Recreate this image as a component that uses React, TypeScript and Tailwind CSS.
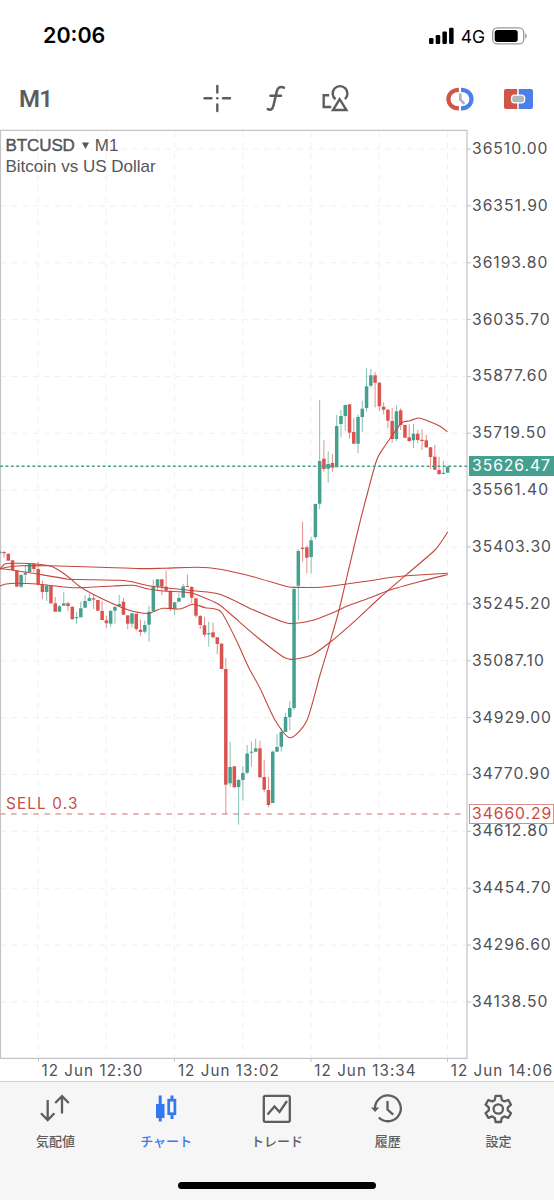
import type { ReactNode } from "react";

const TEAL = "#45a08f";
const RED = "#d9544f";
const STEP = 4.265;
const LAST_X = 447.5;
const COUNT = 104;

type Candle = ["g" | "r", number, number, number, number];

// side, body top, body bottom, wick top, wick bottom
const candles: Candle[] = [
  ["g", 551.7, 553.2, 550, 554],
  ["r", 552, 553.2, 551, 557.5],
  ["r", 553.7, 560.7, 553.7, 560.7],
  ["r", 560.3, 570, 560.3, 571],
  ["r", 570.7, 586.7, 570.7, 586.7],
  ["g", 575, 586.7, 574, 588],
  ["g", 572.7, 574.7, 565, 582.7],
  ["g", 564, 572, 563, 572],
  ["r", 564, 569, 563, 572],
  ["r", 569, 584.7, 562, 585.3],
  ["r", 585, 592, 580.7, 599],
  ["g", 585.7, 592, 584, 601],
  ["r", 585.7, 603.3, 585, 604],
  ["r", 603.3, 611.7, 597, 611.7],
  ["g", 606.3, 611.7, 605, 611.7],
  ["g", 603.3, 605.7, 591.7, 605.7],
  ["r", 603.3, 606, 601.7, 611],
  ["r", 606.7, 619.3, 606.7, 619.3],
  ["g", 617, 618.2, 612, 623.7],
  ["g", 608.3, 617.3, 601.7, 617.3],
  ["g", 601, 607.7, 595, 607.7],
  ["g", 598, 601, 594, 601],
  ["r", 598.3, 599.6, 595, 609],
  ["r", 600, 610.7, 600, 611],
  ["r", 611, 620, 601, 620],
  ["r", 620.3, 623.3, 615.7, 628],
  ["g", 611, 623.7, 610, 626.7],
  ["g", 607, 610.7, 606, 623.7],
  ["g", 604, 606, 595, 607],
  ["r", 601.7, 614.7, 598, 615],
  ["r", 615.3, 623.7, 615.3, 629],
  ["g", 613.3, 623.7, 613, 627.7],
  ["r", 613.7, 629, 613.7, 631],
  ["r", 629.7, 632, 619.3, 635.7],
  ["g", 625, 631.7, 620.7, 633.7],
  ["g", 611.7, 624.7, 606, 641.7],
  ["g", 586.3, 611, 580, 611],
  ["g", 579.3, 586.7, 579, 591],
  ["r", 579.3, 586.7, 579, 595],
  ["r", 586.7, 590.7, 570.7, 591],
  ["r", 590.7, 609, 590.7, 611],
  ["g", 602.3, 608.3, 602, 615],
  ["g", 598, 601.7, 592.7, 601.7],
  ["g", 586.3, 597.7, 584, 597.7],
  ["r", 586, 587, 574.5, 587],
  ["r", 587, 597.7, 586, 603],
  ["r", 598.3, 615.7, 598, 617.5],
  ["r", 616, 625, 615, 629],
  ["r", 625.3, 634.7, 617, 637],
  ["g", 633.2, 634.4, 621.7, 646.7],
  ["r", 632.3, 637.3, 622.7, 638],
  ["r", 637.3, 644, 637, 654],
  ["r", 643.7, 669, 643, 669],
  ["r", 669, 784.7, 658, 814],
  ["g", 767, 783.3, 741.7, 786.7],
  ["r", 766.3, 787.3, 766, 787.3],
  ["g", 780, 787, 779, 824.7],
  ["g", 773, 780, 766, 800.7],
  ["g", 753.5, 772.8, 745, 774],
  ["g", 751.7, 752.7, 741.7, 766.7],
  ["g", 748.3, 751.7, 738.7, 752],
  ["r", 748.3, 777.3, 740.7, 778],
  ["r", 777, 789.7, 760, 792],
  ["r", 790, 805, 776.7, 807.3],
  ["g", 751.7, 803, 750.5, 803],
  ["g", 747, 751.7, 734, 752],
  ["g", 732, 746.7, 728.3, 751.7],
  ["g", 717, 732, 712.7, 732],
  ["g", 708, 717, 701.3, 730],
  ["g", 589, 708, 588, 710],
  ["g", 551, 585.7, 549.3, 620],
  ["r", 547.7, 549, 521.7, 561.7],
  ["r", 547.3, 557.7, 545.3, 573.3],
  ["g", 540.3, 557, 536.7, 573.3],
  ["g", 504, 537, 503.5, 539.3],
  ["g", 461, 503.7, 400, 509],
  ["r", 458.7, 469, 440, 471.7],
  ["g", 464, 468.7, 451.3, 482.7],
  ["r", 463, 467.7, 453.7, 471.7],
  ["g", 426, 467.3, 415, 467.5],
  ["g", 416, 424, 410, 437.3],
  ["g", 405, 416, 404.5, 430.7],
  ["r", 404.3, 432.7, 404, 438.7],
  ["r", 432, 443.7, 418.3, 444],
  ["g", 417, 443.7, 414.3, 453.3],
  ["g", 408.7, 417, 400.7, 431.7],
  ["g", 386.3, 408, 368.3, 411.7],
  ["g", 375.3, 385.7, 369, 387.3],
  ["r", 375.3, 382.7, 372, 407.3],
  ["r", 382.7, 406.3, 382, 411],
  ["r", 406.7, 409.7, 402.3, 414.3],
  ["r", 409.7, 420.7, 409, 428.3],
  ["r", 421, 439, 408, 442.7],
  ["g", 411.3, 439, 405.3, 441],
  ["r", 410.3, 425, 408.3, 430],
  ["r", 425, 437.7, 424.5, 438],
  ["r", 437.3, 441, 424.3, 442],
  ["g", 433.7, 440.3, 424, 448],
  ["r", 433.7, 440, 430, 443],
  ["r", 439.8, 441, 429.3, 450],
  ["r", 440.3, 447.3, 435, 448],
  ["r", 447.3, 457, 447, 469],
  ["r", 456.7, 469.7, 445, 470],
  ["r", 470, 474, 456.7, 475],
  ["g", 472.8, 474, 461, 474],
  ["g", 466.7, 472.7, 466, 473],
];

type Pt = [number, number];
const averages: Pt[][] = [
  [[0, 569], [8, 567], [20, 565.8], [50, 565.8], [100, 567.3], [140, 568.6], [163, 568.3], [197, 567.3], [220, 569.3], [253, 576.7], [286.7, 586.5], [297, 587.4], [320, 587.2], [345, 584.2], [370, 580.7], [390, 577.5], [406.7, 575.7], [447.7, 573.3]],
  [[0, 568.5], [27, 572.3], [67, 579], [80, 579.5], [120, 580.3], [132, 581.8], [150, 586], [193, 590.7], [220, 594.3], [253, 609.7], [284, 622.3], [293, 623.5], [313, 620.2], [336.7, 611], [346.7, 606.2], [370, 597.8], [390, 590], [420, 581.5], [447.7, 574.5]],
  [[0, 586], [6, 584], [17, 583.3], [37, 584], [73, 587.7], [113, 586], [133, 585.3], [147, 588.7], [163, 591], [190, 592.7], [205, 598], [220, 605.3], [246.7, 628.3], [260, 639.5], [283, 656.7], [291.7, 659.4], [311.7, 655], [330, 642.3], [356.7, 619.3], [380, 597.5], [406.7, 574.3], [435, 550], [447.7, 532]],
  [[0, 569], [5, 564], [13, 563.3], [30, 563.5], [50, 566], [60, 571], [70, 578.3], [80, 586.7], [100, 597.7], [127, 609.5], [140, 612.7], [149, 613.3], [163, 608.3], [180, 609], [193, 604.3], [205, 607.7], [215, 609], [222, 613], [236.7, 641], [248.3, 666.7], [260, 688.3], [275, 720], [290, 737.7], [306.7, 721], [320, 675], [330, 642], [339.3, 609], [358, 530], [368.3, 490], [376.7, 460], [383.3, 448.3], [393.3, 434], [401.7, 422.7], [410, 420.7], [418, 418], [425, 419.7], [440, 426.3], [447.3, 431.7]],
];

const smooth = (p: Pt[]) =>
  p.slice(1).reduce((d, b, j) => {
    const a = p[j];
    const before = p[Math.max(0, j - 1)];
    const after = p[Math.min(p.length - 1, j + 2)];
    const c1 = [a[0] + (b[0] - before[0]) / 8, a[1] + (b[1] - before[1]) / 8];
    const c2 = [b[0] - (after[0] - a[0]) / 8, b[1] - (after[1] - a[1]) / 8];
    return `${d}C${c1[0]} ${c1[1]} ${c2[0]} ${c2[1]} ${b[0]} ${b[1]}`;
  }, `M${p[0][0]} ${p[0][1]}`);

const prices = ["36510.00", "36351.90", "36193.80", "36035.70", "35877.60", "35719.50", "35561.40", "35403.30", "35245.20", "35087.10", "34929.00", "34770.90", "34612.80", "34454.70", "34296.60", "34138.50"];
const times = ["12 Jun 12:30", "12 Jun 13:02", "12 Jun 13:34", "12 Jun 14:06"];
const gridX = [38, 106.2, 174.5, 242.8, 311, 379.2, 447.5];

function Chart() {
  return (
    <svg width="472" height="933" viewBox="0 129 472 933" className="block shrink-0">
      {gridX.map((x) => (
        <line key={x} x1={x} x2={x} y1="131" y2="1058" stroke="#f1f1f2" strokeDasharray="6 5" />
      ))}
      {prices.map((p, i) => (
        <g key={p}>
          <line x1="0" x2="466" y1={149 + i * 56.86} y2={149 + i * 56.86} stroke="#f1f1f2" strokeDasharray="6 5" />
          <line x1="467" x2="471" y1={149 + i * 56.86} y2={149 + i * 56.86} stroke="#c4c4c6" />
        </g>
      ))}
      <path d="M0.5 1058V130.3H467V1058.3H0" fill="none" stroke="#c4c4c6" strokeWidth="1.2" />
      {[38.5, 174.5, 311, 447.5].map((x) => (
        <line key={x} x1={x} x2={x} y1="1058" y2="1062" stroke="#c4c4c6" />
      ))}
      <line x1="0" x2="466" y1="814" y2="814" stroke="#dfa09e" strokeWidth="1.3" strokeDasharray="5.5 5.6" />
      {candles.map(([side, top, bottom, high, low], i) => {
        const x = LAST_X - STEP * (COUNT - (i - 1)) + 0.1;
        const color = side === "g" ? TEAL : RED;
        return (
          <g key={i}>
            <line x1={x} x2={x} y1={high} y2={low} stroke={color} strokeWidth="1" opacity="0.65" />
            <rect x={x - 1.75} y={top} width="3.5" height={bottom - top} fill={color} />
          </g>
        );
      })}
      {averages.map((p, i) => (
        <path key={i} d={smooth(p)} fill="none" stroke="#c4463d" strokeWidth="1.1" />
      ))}
      <line x1="0" x2="467" y1="466.2" y2="466.2" stroke={TEAL} strokeWidth="1.5" strokeDasharray="3 2.4" />
    </svg>
  );
}

function Tab({ label, active, children }: { label: string; active?: boolean; children: ReactNode }) {
  return (
    <div className={`flex flex-1 flex-col items-center ${active ? "text-[#3478f0]" : "text-[#5d5d5f]"}`}>
      <svg width="34" height="34" viewBox="0 0 34 34" fill="none" stroke="currentColor" strokeWidth="2.3">
        {children}
      </svg>
      <span className="mt-[5px] text-[13px] leading-[20px] font-medium">{label}</span>
    </div>
  );
}

export default function App() {
  return (
    <div className="flex h-[1200px] w-[554px] flex-col overflow-hidden bg-white font-['Inter','Noto_Sans_CJK_JP',sans-serif]">
      <header className="flex h-[71px] shrink-0 items-center pr-[26px] pl-[43px]">
        <span className="text-[21.5px] leading-none font-semibold text-black">20:06</span>
        <svg width="25" height="18" viewBox="0 0 25 18" className="ml-auto">
          <rect x="0" y="11" width="4.5" height="6" rx="1.2" />
          <rect x="6.7" y="8" width="4.5" height="9" rx="1.2" />
          <rect x="13.4" y="4.5" width="4.5" height="12.5" rx="1.2" />
          <rect x="20.1" y="0.7" width="4.5" height="16.3" rx="1.2" />
        </svg>
        <span className="ml-[7px] pt-[2px] text-[17.5px] leading-none text-black">4G</span>
        <svg width="36" height="18" viewBox="0 0 36 18" className="ml-[7px]">
          <rect x="0.7" y="0.9" width="31" height="16" rx="4.5" fill="none" stroke="#999" strokeWidth="1.3" />
          <rect x="2.7" y="2.9" width="23" height="12" rx="2.7" />
          <path d="M33.2 6.3c2 .8 2 4.4 0 5.2z" fill="#999" />
        </svg>
      </header>

      <div className="flex h-[58px] shrink-0 items-center pr-[21px] pb-[3px] pl-[19px] text-[#5d5d5f]">
        <span className="w-[182px] font-['Roboto',sans-serif] text-[24px] leading-none font-semibold tracking-[-0.8px]">M1</span>
        <svg width="34" height="34" viewBox="0 0 34 34" fill="none" stroke="currentColor" strokeWidth="2.4" strokeLinecap="round">
          <path d="M16.3 4v6.5M16.3 22.5V29M3.5 16.3h7M22 16.3h7" />
          <circle cx="16.3" cy="16.3" r="1.3" fill="currentColor" stroke="none" />
        </svg>
        <svg width="34" height="34" viewBox="0 0 34 34" fill="none" stroke="currentColor" strokeWidth="2.5" strokeLinecap="round" className="ml-[24px]">
          <path d="M25 5.7c-3.7-1.7-6.3-.3-7.2 3.6l-3.4 14.5c-.9 3.6-2.9 4.7-5.6 3.3M11.5 13.8h10.5" />
        </svg>
        <svg width="34" height="34" viewBox="0 0 34 34" fill="none" stroke="currentColor" strokeWidth="2.4" className="ml-[26px]">
          <path d="M16.5 17.3a7.4 7.4 0 1 1 9.4-.2M10.2 13.2H4.7V25h7.6M20.7 17.2 14 28h13.4z" />
        </svg>
        <svg width="30" height="26" viewBox="0 0 30 26" fill="none" className="ml-auto">
          <path d="M13.9 3.8c-14 0-14 18.6 0 18.6" stroke="#cf5647" strokeWidth="4.2" />
          <path d="M16 3.8c14 0 14 18.6 0 18.6" stroke="#4a80e8" strokeWidth="4.2" />
          <path d="M15.3 7.5v6l4 4.3" stroke="#adb5bc" strokeWidth="2.7" />
        </svg>
        <svg width="30" height="22" viewBox="0 0 30 22" className="ml-[28px]">
          <path d="M3 1h11.2v20H3a2 2 0 0 1-2-2V3a2 2 0 0 1 2-2z" fill="#cf5647" />
          <path d="M15.7 1H28a2 2 0 0 1 2 2v16a2 2 0 0 1-2 2H15.7z" fill="#4a80e8" />
          <rect x="8.5" y="7.2" width="13.2" height="7.6" rx="3.3" fill="#aeb6be" stroke="#fff" strokeWidth="1.3" />
        </svg>
      </div>

      <main className="relative flex h-[933px] shrink-0">
        <Chart />
        <div className="flex flex-col pt-[13px] text-[15.7px] leading-[14px] tracking-[0.95px] text-[#505055]">
          {prices.map((p) => (
            <span key={p} className="h-[56.86px] shrink-0">{p}</span>
          ))}
        </div>
        <div className="absolute top-[6px] left-[5.5px] font-['Liberation_Sans',sans-serif] text-[17px] leading-[21px] text-[#55555a]">
          <div className="flex items-center">
            <span className="tracking-[-0.1px] [-webkit-text-stroke:0.4px_#55555a]">BTCUSD</span>
            <svg width="7" height="7" viewBox="0 0 7 7" className="mr-[6px] ml-[7px]" fill="currentColor">
              <path d="M0 .5h7L3.5 7z" />
            </svg>
            <span>M1</span>
          </div>
          <div>Bitcoin vs US Dollar</div>
        </div>
        <span className="absolute top-[664px] left-[6px] text-[15.3px] leading-[22px] tracking-[1.15px] text-[#c4514a]">SELL 0.3</span>
        <span className="absolute top-[327px] left-[469px] h-[20px] w-[85px] bg-[#45a08f] pl-[3px] text-[15.7px] leading-[20px] tracking-[0.95px] text-white">35626.47</span>
        <span className="absolute top-[675px] left-[469px] h-[20px] w-[85px] border border-[#dc8c88] bg-white pl-[2px] text-[15.7px] leading-[18px] tracking-[0.95px] text-[#cb4b44]">34660.29</span>
      </main>

      <div className="flex h-[19px] shrink-0 pl-[41.5px] text-[15.2px] leading-[17px] tracking-[1.05px] whitespace-nowrap text-[#505055]">
        {times.map((t) => (
          <span key={t} className="w-[136.4px] shrink-0">{t}</span>
        ))}
      </div>

      <nav className="relative flex flex-1 border-t border-[#d0d0d2] bg-[#f6f6f6] pt-[10px]">
        <Tab label="気配値">
          <path d="M9.7 8v20.5M3 21.3l6.7 6.8 6.7-6.8M24 21.5V4.5M17.2 11 24 4.2l6.8 6.8" />
        </Tab>
        <Tab label="チャート" active>
          <path d="M11.2 3.5v26M23 3.5v4M23 23v4" strokeWidth="3" />
          <rect x="7" y="12" width="8.5" height="14" fill="currentColor" stroke="none" />
          <rect x="19.7" y="8.2" width="6.2" height="13.5" strokeWidth="2.7" />
        </Tab>
        <Tab label="トレード">
          <rect x="3.8" y="3.8" width="26" height="26" rx="1.5" />
          <path d="m7.5 22.5 7-8 5 5.5 7.5-11" />
        </Tab>
        <Tab label="履歴">
          <path d="M4.1 18a12.9 12.9 0 1 1 3.7 7.5M16.5 9v8.5l5.7 5.2" />
          <path d="M0 15.5h8.2L4.1 20z" fill="currentColor" stroke="none" />
        </Tab>
        <Tab label="設定">
          <g transform="translate(-0.7 0)">
            <path d="M14.3 3.8h5.4l.8 4.1 2.5 1.5 4-1.4 2.7 4.7-3.2 2.7v3l3.2 2.7-2.7 4.7-4-1.4-2.5 1.5-.8 4.1h-5.4l-.8-4.1L11 24.4l-4 1.4-2.7-4.7 3.2-2.7v-3l-3.2-2.7L7 8l4 1.4 2.5-1.5z" strokeLinejoin="round" />
            <circle cx="17" cy="17" r="4.7" />
          </g>
        </Tab>
        <div className="absolute bottom-[11px] left-[178px] h-[7px] w-[198px] rounded-full bg-black" />
      </nav>
    </div>
  );
}
